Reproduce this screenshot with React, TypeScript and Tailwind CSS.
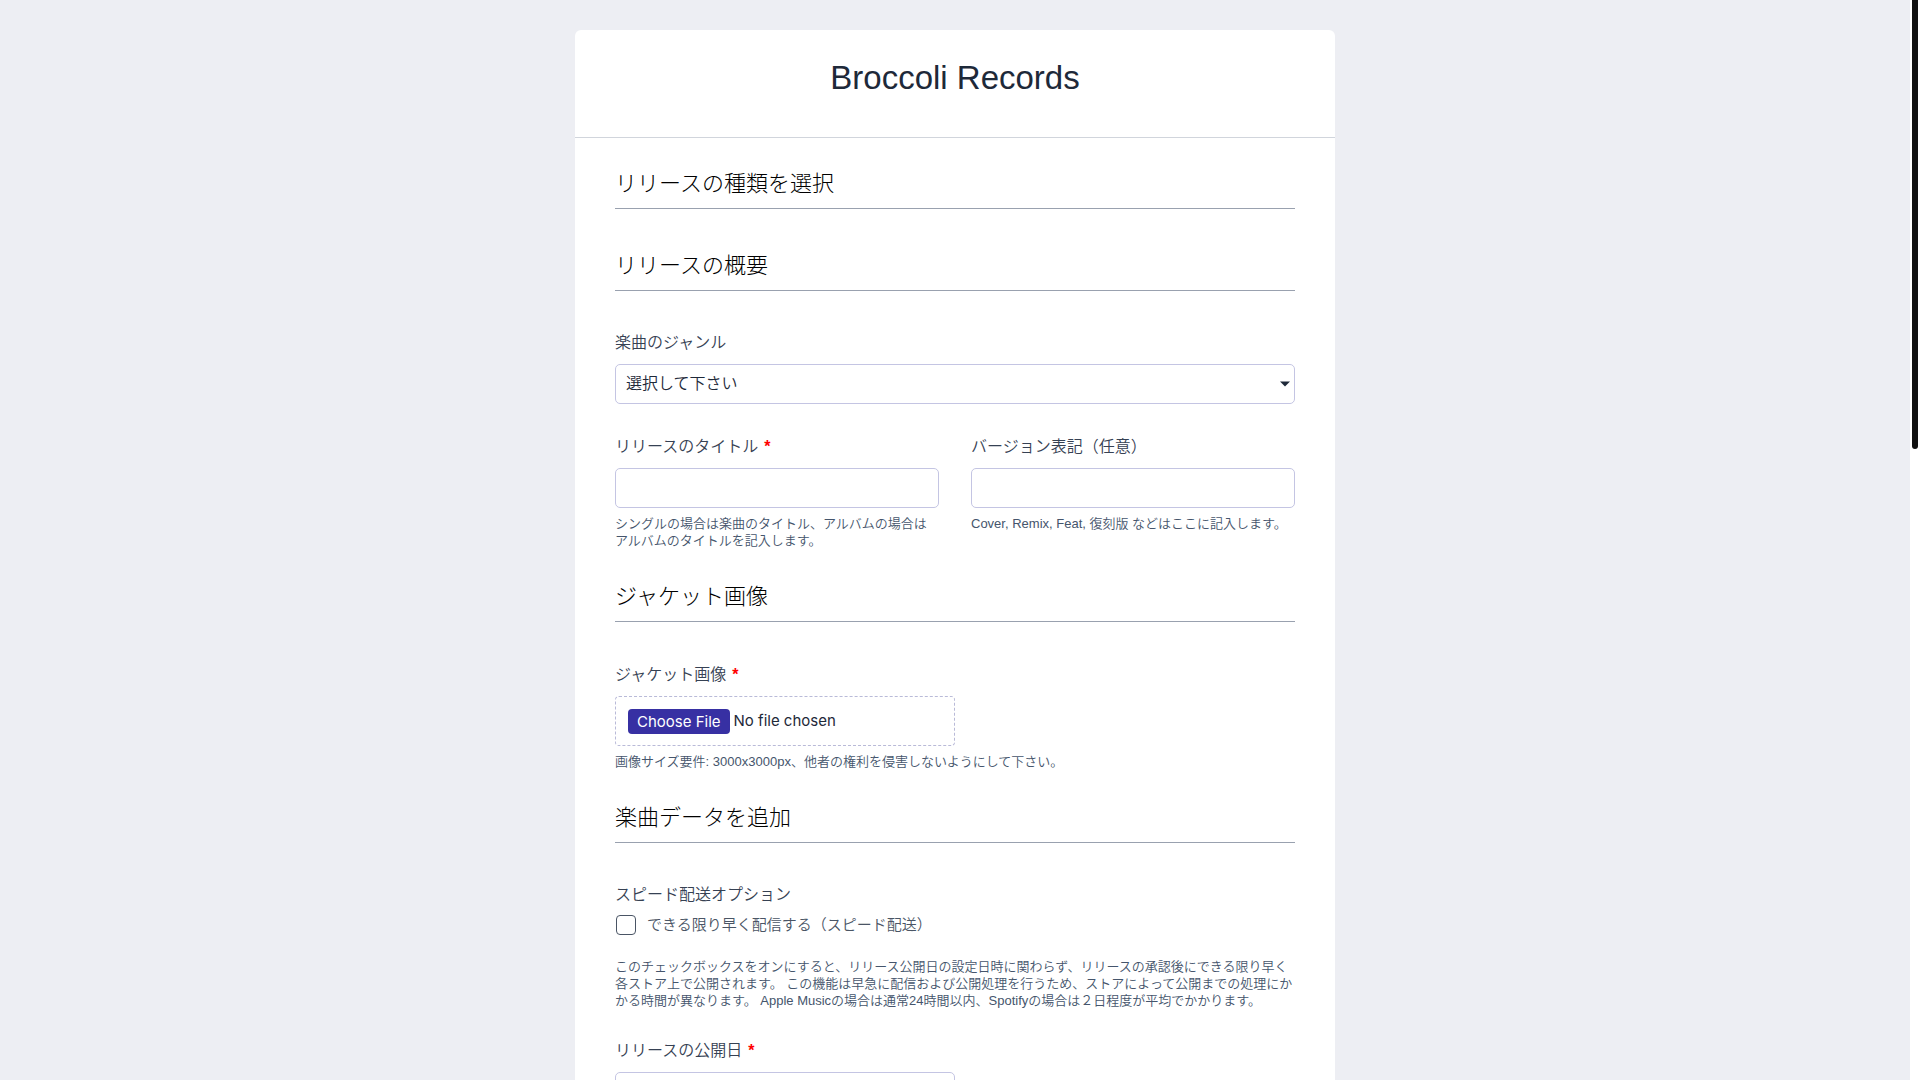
import React, { useState } from "react";

const genres = ["ポップ", "ロック", "ヒップホップ", "エレクトロニック", "ジャズ", "クラシック", "アニメ"];

function Label({ children, required }: { children: React.ReactNode; required?: boolean }) {
  return (
    <label className="mb-[9px] block text-[16px] leading-6 font-[350] text-gray-700">
      {children}
      {required && <span className="ml-1.5 font-bold text-[#f00]">*</span>}
    </label>
  );
}

function SectionTitle({ children, first }: { children: React.ReactNode; first?: boolean }) {
  return (
    <h2
      className={`${first ? "" : "mt-10"} border-b border-gray-400 pt-[2px] pb-[9px] text-[22px] leading-[30px] font-light text-black`}
    >
      {children}
    </h2>
  );
}

function Help({ children }: { children: React.ReactNode }) {
  return <p className="mt-[7px] text-[13px] leading-[17px] font-[350] text-slate-600">{children}</p>;
}

function FilePicker({ accept }: { accept: string }) {
  return (
    <label className="flex h-[50px] w-[340px] cursor-pointer items-center rounded-[4px] border border-dashed border-[#b9bad8] pl-3">
      <input type="file" accept={accept} className="hidden" />
      <span
        className="rounded-[4px] bg-[#3730a3] px-[9px] py-[2px] text-[15px] leading-[21px] text-white"
        style={{ fontFamily: "Inter, sans-serif" }}
      >
        Choose File
      </span>
      <span className="ml-1 text-[15px] text-gray-800" style={{ fontFamily: "Inter, sans-serif" }}>
        No file chosen
      </span>
    </label>
  );
}

const inputCls =
  "block h-10 rounded-[5px] border border-[#c4c5e3] bg-white px-2.5 text-[16px] font-[350] text-gray-800 outline-none focus:border-indigo-500";

export default function App() {
  const [speed, setSpeed] = useState(false);
  const [genre, setGenre] = useState("");

  return (
    <div
      className="min-h-screen bg-[#edeef3] pr-[10px] pt-[30px] pb-[120px]"
      style={{ fontFamily: '"Liberation Sans", "Noto Sans CJK JP", sans-serif' }}
    >
      {/* scrollbar */}
      <div className="fixed right-0 top-0 z-10 h-screen w-[10px] bg-white">
        <div className="ml-[2px] h-[449px] w-[6px] rounded-b-full bg-[#111]" />
      </div>

      <div className="mx-auto w-[760px] rounded-md bg-white">
        {/* Header */}
        <div className="border-b border-gray-300 pt-[28px] pb-[39px] text-center">
          <h1 className="text-[33px] leading-10 text-gray-800">Broccoli Records</h1>
        </div>

        <form className="px-10 pt-[29px] pb-[100px]" onSubmit={(e) => e.preventDefault()}>
          <SectionTitle first>リリースの種類を選択</SectionTitle>

          <SectionTitle>リリースの概要</SectionTitle>

          <div className="mt-[40px]">
            <Label>楽曲のジャンル</Label>
            <div className="relative">
              <select
                value={genre}
                onChange={(e) => setGenre(e.target.value)}
                className={`${inputCls} w-full appearance-none pr-8`}
              >
                <option value="">選択して下さい</option>
                {genres.map((g) => (
                  <option key={g} value={g}>
                    {g}
                  </option>
                ))}
              </select>
              <span className="pointer-events-none absolute right-[5px] top-1/2 -translate-y-1/2 border-x-[5px] border-t-[5px] border-x-transparent border-t-gray-800" />
            </div>
          </div>

          <div className="mt-[31px] grid grid-cols-2 gap-8">
            <div>
              <Label required>リリースのタイトル</Label>
              <input type="text" className={`${inputCls} w-full`} />
              <Help>シングルの場合は楽曲のタイトル、アルバムの場合はアルバムのタイトルを記入します。</Help>
            </div>
            <div>
              <Label>バージョン表記（任意）</Label>
              <input type="text" className={`${inputCls} w-full`} />
              <Help>Cover, Remix, Feat, 復刻版 などはここに記入します。</Help>
            </div>
          </div>

          <div className="mt-[31px]">
            <SectionTitle first>ジャケット画像</SectionTitle>
          </div>

          <div className="mt-[41px]">
            <Label required>ジャケット画像</Label>
            <FilePicker accept="image/*" />
            <Help>画像サイズ要件: 3000x3000px、他者の権利を侵害しないようにして下さい。</Help>
          </div>

          <div className="mt-[31px]">
            <SectionTitle first>楽曲データを追加</SectionTitle>
          </div>

          <div className="mt-[40px]">
            <label className="block text-[16px] leading-6 font-[350] text-gray-700">スピード配送オプション</label>
            <label className="mt-[6px] flex h-6 cursor-pointer items-center">
              <input
                type="checkbox"
                checked={speed}
                onChange={(e) => setSpeed(e.target.checked)}
                className="ml-px h-5 w-5 appearance-none rounded-[4px] border-[1.5px] border-gray-600 bg-white checked:bg-indigo-700"
              />
              <span className="ml-[11px] text-[15px] font-[350] text-gray-600">
                できる限り早く配信する（スピード配送）
              </span>
            </label>
            <p className="mt-[21px] text-[13px] leading-[17px] font-[350] text-slate-600">
              このチェックボックスをオンにすると、リリース公開日の設定日時に関わらず、リリースの承認後にできる限り早く各ストア上で公開されます。
              この機能は早急に配信および公開処理を行うため、ストアによって公開までの処理にかかる時間が異なります。
              Apple Musicの場合は通常24時間以内、Spotifyの場合は２日程度が平均でかかります。
            </p>
          </div>

          <div className="mt-[30px]">
            <Label required>リリースの公開日</Label>
            <input type="date" className={`${inputCls} w-[340px]`} />
            <Help>ストアでの公開日を指定して下さい。</Help>
          </div>

          <div className="mt-[30px] grid grid-cols-2 gap-8">
            <div>
              <Label required>アーティスト名</Label>
              <input type="text" className={`${inputCls} w-full`} />
              <Help>複数のアーティストの場合はカンマで区切って下さい。</Help>
            </div>
            <div>
              <Label>アーティスト名（英語表記）</Label>
              <input type="text" className={`${inputCls} w-full`} />
            </div>
          </div>

          <div className="mt-[30px]">
            <Label required>レーベル名</Label>
            <input type="text" defaultValue="Broccoli Records" className={`${inputCls} w-full`} />
          </div>

          <div className="mt-[30px] grid grid-cols-2 gap-8">
            <div>
              <Label required>(C) 著作権表記</Label>
              <input type="text" className={`${inputCls} w-full`} />
            </div>
            <div>
              <Label required>(P) 原盤権表記</Label>
              <input type="text" className={`${inputCls} w-full`} />
            </div>
          </div>

          <SectionTitle>トラック</SectionTitle>

          {[1, 2].map((n) => (
            <div key={n} className="mt-[39px] rounded-md border border-gray-200 p-6">
              <div className="text-[18px] text-gray-900">トラック {n}</div>
              <div className="mt-5 grid grid-cols-2 gap-8">
                <div>
                  <Label required>楽曲タイトル</Label>
                  <input type="text" className={`${inputCls} w-full`} />
                </div>
                <div>
                  <Label>ISRC（任意）</Label>
                  <input type="text" className={`${inputCls} w-full`} />
                </div>
              </div>
              <div className="mt-[30px]">
                <Label required>音源ファイル</Label>
                <FilePicker accept="audio/*" />
                <Help>WAV形式（16bit / 44.1kHz 以上）でアップロードして下さい。</Help>
              </div>
            </div>
          ))}

          <div className="mt-14 flex justify-center">
            <button type="submit" className="rounded-md bg-[#3730a3] px-10 py-3 text-[16px] text-white">
              申請する
            </button>
          </div>
        </form>
      </div>
    </div>
  );
}
